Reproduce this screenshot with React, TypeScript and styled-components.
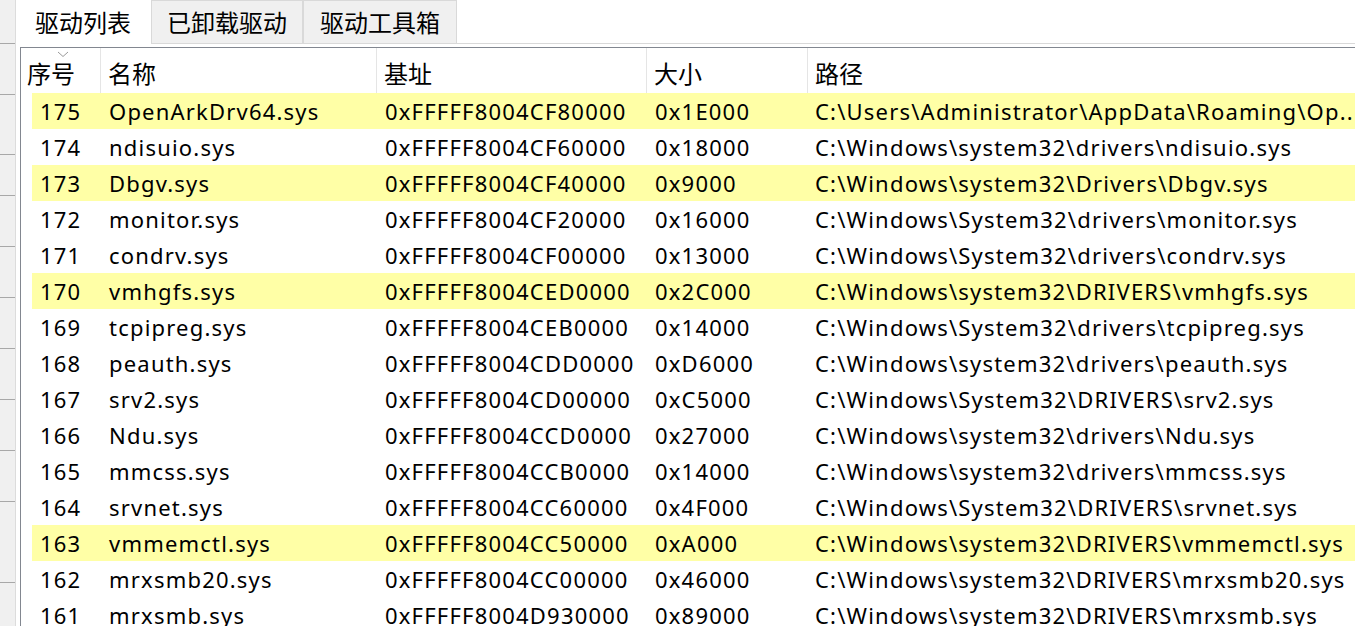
import React from "react";
import styled, { createGlobalStyle } from "styled-components";

const GlobalStyle = createGlobalStyle`
  html, body {
    margin: 0;
    padding: 0;
    background: #ffffff;
    overflow: hidden;
  }
  body {
    font-family: "Noto Sans", "Noto Sans CJK SC", sans-serif;
    font-size: 22px;
    color: #000000;
  }
`;

const Window = styled.div`
  display: flex;
  width: 1355px;
  height: 626px;
  overflow: hidden;
`;

const SideStrip = styled.div`
  display: flex;
  flex-direction: column;
  width: 15px;
  flex-shrink: 0;
  background: #f0f0f0;
  border-right: 1px solid #dcdcdc;
`;

const SideItem = styled.div<{ $h: number }>`
  height: ${(p) => p.$h}px;
  flex-shrink: 0;
  border-bottom: 1px solid #a8a8a8;
`;

const Main = styled.div`
  display: flex;
  flex-direction: column;
  flex: 1;
  min-width: 0;
`;

const TabBar = styled.div`
  display: flex;
  height: 44px;
  flex-shrink: 0;
`;

const Tab = styled.div<{ $active?: boolean; $w: number }>`
  width: ${(p) => p.$w}px;
  height: ${(p) => (p.$active ? 45 : 44)}px;
  box-sizing: border-box;
  display: flex;
  align-items: center;
  justify-content: center;
  font-family: "Noto Sans CJK SC", sans-serif;
  font-size: 24px;
  background: ${(p) => (p.$active ? "#ffffff" : "#f0f0f0")};
  border: 1px solid ${(p) => (p.$active ? "#ffffff" : "#d9d9d9")};
  border-left: ${(p) => (p.$active ? "none" : "1px solid #d9d9d9")};
  position: relative;
  z-index: ${(p) => (p.$active ? 2 : 1)};
  padding-bottom: 2px;
`;

const TabFill = styled.div`
  flex: 1;
  border-bottom: 1px solid #d9d9d9;
`;

const Pane = styled.div`
  flex: 1;
  padding: 3px 0 0 4px;
  min-height: 0;
`;

const TableFrame = styled.div`
  border-top: 1px solid #828790;
  border-left: 1px solid #828790;
  height: 100%;
  box-sizing: border-box;
  overflow: hidden;
`;

const HeaderRow = styled.div`
  display: flex;
  height: 45px;
  align-items: stretch;
  position: relative;
`;

const HeaderCell = styled.div<{ $w?: number; $first?: boolean }>`
  ${(p) => (p.$w ? `width: ${p.$w}px;` : "flex: 1;")}
  flex-shrink: 0;
  box-sizing: border-box;
  display: flex;
  align-items: center;
  padding-left: ${(p) => (p.$first ? 6 : 7)}px;
  padding-top: 3px;
  font-family: "Noto Sans CJK SC", sans-serif;
  font-size: 24px;
  white-space: nowrap;
  border-right: ${(p) => (p.$w ? "1px solid #e5e5e5" : "none")};
`;

const SortArrow = styled.svg`
  position: absolute;
  left: 36px;
  top: 3px;
`;

const Row = styled.div<{ $hl?: boolean }>`
  display: flex;
  height: 36px;
  align-items: center;
  margin-left: 11px;
  background: ${(p) => (p.$hl ? "#ffffa6" : "transparent")};
`;

const Cell = styled.div<{ $w?: number; $pad?: number }>`
  ${(p) => (p.$w ? `width: ${p.$w}px;` : "flex: 1;")}
  flex-shrink: 0;
  box-sizing: border-box;
  padding-left: ${(p) => p.$pad ?? 8}px;
  white-space: nowrap;
  overflow: hidden;
  letter-spacing: 1.2px;
`;

type Driver = {
  id: number;
  name: string;
  base: string;
  size: string;
  path: string;
  hl?: boolean;
};

const drivers: Driver[] = [
  { id: 175, name: "OpenArkDrv64.sys", base: "0xFFFFF8004CF80000", size: "0x1E000", path: "C:\\Users\\Administrator\\AppData\\Roaming\\Op..", hl: true },
  { id: 174, name: "ndisuio.sys", base: "0xFFFFF8004CF60000", size: "0x18000", path: "C:\\Windows\\system32\\drivers\\ndisuio.sys" },
  { id: 173, name: "Dbgv.sys", base: "0xFFFFF8004CF40000", size: "0x9000", path: "C:\\Windows\\system32\\Drivers\\Dbgv.sys", hl: true },
  { id: 172, name: "monitor.sys", base: "0xFFFFF8004CF20000", size: "0x16000", path: "C:\\Windows\\System32\\drivers\\monitor.sys" },
  { id: 171, name: "condrv.sys", base: "0xFFFFF8004CF00000", size: "0x13000", path: "C:\\Windows\\System32\\drivers\\condrv.sys" },
  { id: 170, name: "vmhgfs.sys", base: "0xFFFFF8004CED0000", size: "0x2C000", path: "C:\\Windows\\system32\\DRIVERS\\vmhgfs.sys", hl: true },
  { id: 169, name: "tcpipreg.sys", base: "0xFFFFF8004CEB0000", size: "0x14000", path: "C:\\Windows\\System32\\drivers\\tcpipreg.sys" },
  { id: 168, name: "peauth.sys", base: "0xFFFFF8004CDD0000", size: "0xD6000", path: "C:\\Windows\\system32\\drivers\\peauth.sys" },
  { id: 167, name: "srv2.sys", base: "0xFFFFF8004CD00000", size: "0xC5000", path: "C:\\Windows\\System32\\DRIVERS\\srv2.sys" },
  { id: 166, name: "Ndu.sys", base: "0xFFFFF8004CCD0000", size: "0x27000", path: "C:\\Windows\\system32\\drivers\\Ndu.sys" },
  { id: 165, name: "mmcss.sys", base: "0xFFFFF8004CCB0000", size: "0x14000", path: "C:\\Windows\\system32\\drivers\\mmcss.sys" },
  { id: 164, name: "srvnet.sys", base: "0xFFFFF8004CC60000", size: "0x4F000", path: "C:\\Windows\\System32\\DRIVERS\\srvnet.sys" },
  { id: 163, name: "vmmemctl.sys", base: "0xFFFFF8004CC50000", size: "0xA000", path: "C:\\Windows\\system32\\DRIVERS\\vmmemctl.sys", hl: true },
  { id: 162, name: "mrxsmb20.sys", base: "0xFFFFF8004CC00000", size: "0x46000", path: "C:\\Windows\\system32\\DRIVERS\\mrxsmb20.sys" },
  { id: 161, name: "mrxsmb.sys", base: "0xFFFFF8004D930000", size: "0x89000", path: "C:\\Windows\\system32\\DRIVERS\\mrxsmb.sys" },
];

const sideHeights = [43, 50, 59, 40, 50, 50, 50, 50, 50, 50, 80];

export default function App() {
  return (
    <>
      <GlobalStyle />
      <Window>
        <SideStrip>
          {sideHeights.map((h, i) => (
            <SideItem key={i} $h={h} />
          ))}
        </SideStrip>
        <Main>
          <TabBar>
            <Tab $active $w={135}>驱动列表</Tab>
            <Tab $w={152}>已卸载驱动</Tab>
            <Tab $w={154}>驱动工具箱</Tab>
            <TabFill />
          </TabBar>
          <Pane>
            <TableFrame>
              <HeaderRow>
                <HeaderCell $w={80} $first>序号</HeaderCell>
                <HeaderCell $w={276}>名称</HeaderCell>
                <HeaderCell $w={270}>基址</HeaderCell>
                <HeaderCell $w={161}>大小</HeaderCell>
                <HeaderCell>路径</HeaderCell>
                <SortArrow width="12" height="7" viewBox="0 0 12 7">
                  <path d="M1 1 L6 5.5 L11 1" fill="none" stroke="#9a9a9a" strokeWidth="1" />
                </SortArrow>
              </HeaderRow>
              {drivers.map((d) => (
                <Row key={d.id} $hl={d.hl}>
                  <Cell $w={69}>{d.id}</Cell>
                  <Cell $w={276}>{d.name}</Cell>
                  <Cell $w={270}>{d.base}</Cell>
                  <Cell $w={161}>{d.size}</Cell>
                  <Cell $pad={7}>{d.path}</Cell>
                </Row>
              ))}
            </TableFrame>
          </Pane>
        </Main>
      </Window>
    </>
  );
}
